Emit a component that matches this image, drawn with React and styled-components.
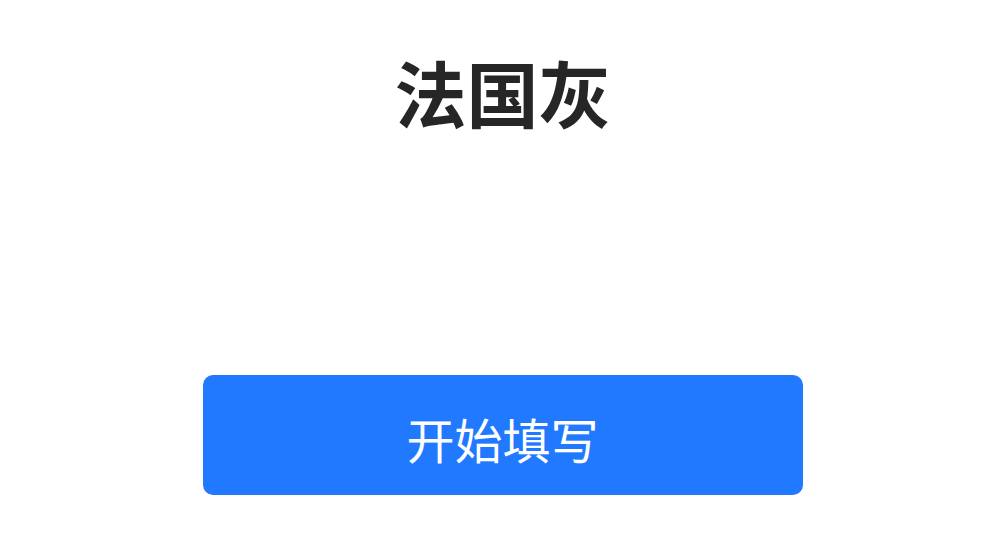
import React from "react";
import styled, { createGlobalStyle } from "styled-components";

const Global = createGlobalStyle`
  html, body { margin: 0; padding: 0; background: #ffffff; }
  body { font-family: "Noto Sans CJK SC", "Noto Sans", sans-serif; }
`;

const Page = styled.div`
  width: 1005px;
  height: 543px;
  display: flex;
  flex-direction: column;
  align-items: center;
  box-sizing: border-box;
  padding-top: 41px;
`;

const Title = styled.h1`
  margin: 0;
  font-size: 72px;
  line-height: 100px;
  font-weight: 700;
  color: #262626;
  letter-spacing: 0;
`;

const StartButton = styled.button`
  margin-top: 234px;
  width: 600px;
  height: 120px;
  border: none;
  border-radius: 10px;
  background: #2079ff;
  color: #ffffff;
  font-family: "Noto Sans CJK SC", "Noto Sans", sans-serif;
  font-size: 48px;
  font-weight: 400;
  cursor: pointer;
  display: flex;
  align-items: center;
  justify-content: center;
  padding: 6px 0 0;
  box-sizing: border-box;
`;

export default function App() {
  return (
    <>
      <Global />
      <Page>
        <Title>法国灰</Title>
        <StartButton>开始填写</StartButton>
      </Page>
    </>
  );
}
